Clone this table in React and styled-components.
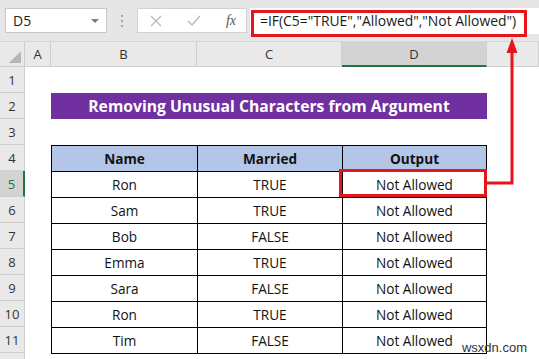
import styled, { createGlobalStyle } from "styled-components"

const GlobalStyle = createGlobalStyle`
  html, body { margin: 0; padding: 0; background: #ffffff; }
  body { width: 539px; height: 359px; overflow: hidden; font-family: "Open Sans", "Liberation Sans", sans-serif; }
  * { box-sizing: border-box; }
`

const Page = styled.div`
  position: relative;
  width: 539px;
  height: 359px;
  overflow: hidden;
  background: #ffffff;
`

const Toolbar = styled.div`
  display: flex;
  align-items: center;
  height: 42px;
  padding: 0 0 0 5px;
  background: #e6e6e6;
  border-bottom: 1px solid #d6d6d6;
`

const NameBox = styled.div`
  position: relative;
  display: flex;
  align-items: center;
  width: 102px;
  height: 25px;
  padding-left: 7px;
  background: #ffffff;
  border: 1px solid #c8c8c8;
  font-size: 14px;
  color: #222;
`

const Caret = styled.span`
  margin-left: auto;
  margin-right: 7px;
  width: 0;
  height: 0;
  border-left: 4px solid transparent;
  border-right: 4px solid transparent;
  border-top: 4px solid #7a7a7a;
`

const Grip = styled.div`
  display: flex;
  flex-direction: column;
  gap: 3px;
  margin: 0 14px 0 14px;
  span {
    width: 2px;
    height: 2px;
    background: #a8a8a8;
  }
`

const FxButtons = styled.div`
  display: flex;
  align-items: center;
  justify-content: space-between;
  width: 110px;
  height: 25px;
  padding: 0 10px 0 12px;
  background: #ffffff;
  border: 1px solid #d2d2d2;
`

const Fx = styled.span`
  font-family: "Liberation Serif", serif;
  font-style: italic;
  font-size: 14px;
  color: #555;
`

const FormulaInput = styled.div`
  flex: 1;
  display: flex;
  align-items: center;
  height: 26px;
  margin-left: 3px;
  padding-left: 10px;
  background: #ffffff;
  font-size: 13.9px;
  color: #1a1a1a;
  white-space: nowrap;
`

const Sheet = styled.div`
  display: grid;
  grid-template-columns: 25px 26px 146px 145px 145px 1fr;
  grid-template-rows: 25px repeat(12, 26px);
`

const Corner = styled.div`
  position: relative;
  background: #e9e9e9;
  border-right: 1px solid #cfcfcf;
  border-bottom: 1px solid #cfcfcf;
  &::after {
    content: "";
    position: absolute;
    right: 3px;
    bottom: 3px;
    width: 0;
    height: 0;
    border-left: 12px solid transparent;
    border-bottom: 12px solid #b5b5b5;
  }
`

const ColHead = styled.div`
  display: flex;
  align-items: center;
  justify-content: center;
  background: ${p => (p.$active ? "#d3d3d3" : "#e9e9e9")};
  border-right: 1px solid #cfcfcf;
  border-bottom: ${p => (p.$active ? "2px solid #217346" : "1px solid #cfcfcf")};
  font-size: 13px;
  color: #333;
`

const RowHead = styled.div`
  display: flex;
  align-items: center;
  justify-content: center;
  grid-column: 1;
  background: ${p => (p.$active ? "#d3d3d3" : "#e9e9e9")};
  border-right: ${p => (p.$active ? "2px solid #217346" : "1px solid #cfcfcf")};
  border-bottom: 1px solid #cfcfcf;
  font-size: 13px;
  color: ${p => (p.$active ? "#217346" : "#333")};
`

const Title = styled.div`
  grid-column: 3 / 6;
  grid-row: 3;
  display: flex;
  align-items: center;
  justify-content: center;
  background: #7030a0;
  color: #ffffff;
  font-weight: 700;
  font-size: 15.7px;
`

const Table = styled.div`
  grid-column: 3 / 6;
  grid-row: 5 / 13;
  display: grid;
  grid-template-columns: 145px 144px 1fr;
  grid-auto-rows: 1fr;
  gap: 1px;
  background: #000000;
  border: 1px solid #000000;
  margin-bottom: -1px;
`

const Cell = styled.div`
  display: flex;
  align-items: center;
  justify-content: center;
  background: ${p => (p.$head ? "#b4c6e7" : "#ffffff")};
  font-weight: ${p => (p.$head ? 700 : 400)};
  font-size: 13.6px;
  color: #111;
`

const FormulaMark = styled.div`
  position: absolute;
  left: 251px;
  top: 10px;
  width: 276px;
  height: 27px;
  border: 3px solid #e8141b;
`

const CellMark = styled.div`
  position: absolute;
  left: 339px;
  top: 169px;
  width: 148px;
  height: 28px;
  border: 3px solid #e8141b;
`

const Connector = styled.svg`
  position: absolute;
  left: 0;
  top: 0;
  pointer-events: none;
`

const Watermark = styled.div`
  position: absolute;
  right: 12px;
  bottom: 4px;
  font-family: "Liberation Sans", Arial, sans-serif;
  font-size: 13px;
  color: #333;
`

const rows = [
  ["Ron", "TRUE"],
  ["Sam", "TRUE"],
  ["Bob", "FALSE"],
  ["Emma", "TRUE"],
  ["Sara", "FALSE"],
  ["Ron", "TRUE"],
  ["Tim", "FALSE"],
]

export default function App() {
  return (
    <Page>
      <GlobalStyle />
      <Toolbar>
        <NameBox>
          D5
          <Caret />
        </NameBox>
        <Grip>
          <span />
          <span />
          <span />
        </Grip>
        <FxButtons>
          <svg width="12" height="12" viewBox="0 0 12 12">
            <path d="M1 1 L11 11 M11 1 L1 11" stroke="#b9b9b9" strokeWidth="1.3" fill="none" />
          </svg>
          <svg width="14" height="11" viewBox="0 0 14 11">
            <path d="M1 6 L5 10 L13 1" stroke="#b9b9b9" strokeWidth="1.4" fill="none" />
          </svg>
          <Fx>fx</Fx>
        </FxButtons>
        <FormulaInput>=IF(C5="TRUE","Allowed","Not Allowed")</FormulaInput>
      </Toolbar>

      <Sheet>
        <Corner />
        <ColHead>A</ColHead>
        <ColHead>B</ColHead>
        <ColHead>C</ColHead>
        <ColHead $active>D</ColHead>
        <ColHead />
        {Array.from({ length: 12 }, (_, i) => (
          <RowHead key={i} $active={i === 4} style={{ gridRow: i + 2 }}>
            {i < 11 ? i + 1 : null}
          </RowHead>
        ))}
        <Title>Removing Unusual Characters from Argument</Title>
        <Table>
          <Cell $head>Name</Cell>
          <Cell $head>Married</Cell>
          <Cell $head>Output</Cell>
          {rows.map((r, i) => [
            <Cell key={"n" + i}>{r[0]}</Cell>,
            <Cell key={"m" + i}>{r[1]}</Cell>,
            <Cell key={"o" + i}>Not Allowed</Cell>,
          ])}
        </Table>
      </Sheet>

      <FormulaMark />
      <CellMark />
      <Connector width="539" height="359">
        <polyline points="487,183 512,183 512,50" stroke="#e8141b" strokeWidth="3" fill="none" />
        <polygon points="512,38 506.5,53 517.5,53" fill="#e8141b" />
      </Connector>
      <Watermark>wsxdn.com</Watermark>
    </Page>
  )
}
